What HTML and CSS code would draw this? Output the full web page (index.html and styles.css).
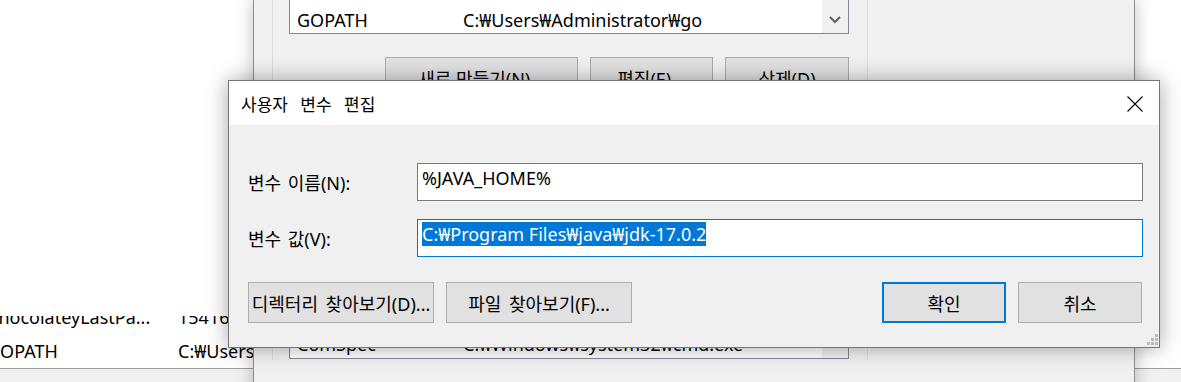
FILE: index.html
```html
<!DOCTYPE html>
<html lang="ko">
<head>
  <meta charset="UTF-8" />
  <title>사용자 변수 편집</title>
  <link rel="stylesheet" href="styles.css">
</head>
<body>
  <div class="screen">

    <!-- 뒤쪽 목록 창 -->
    <div class="back-window">
      <div class="back-list">
        <div class="back-rows">
          <div class="back-row"><span class="back-name">ChocolateyLastPa...</span><span>1541698</span></div>
          <div class="back-row"><span class="back-name">GOPATH</span><span>C:₩Users₩Administrator₩go</span></div>
        </div>
      </div>
    </div>

    <!-- 환경 변수 창 -->
    <div class="env-window">
      <div class="group">
        <div class="var-list top-list">
          <div class="var-rows">
            <div class="var-row"><span class="var-name">GOPATH</span><span>C:₩Users₩Administrator₩go</span></div>
          </div>
          <div class="scrollbar">
            <div class="scroll-arrow">
              <svg width="12" height="8" viewBox="0 0 12 8"><path d="M1 1 L6 6 L11 1" fill="none" stroke="#606060" stroke-width="2"/></svg>
            </div>
          </div>
        </div>

        <div class="env-buttons">
          <div class="btn btn-new">새로 만들기(N)...</div>
          <div class="btn btn-edit">편집(E)...</div>
          <div class="btn btn-del">삭제(D)</div>
        </div>

        <div class="var-list bottom-list">
          <div class="var-rows">
            <div class="var-row"><span class="var-name">ComSpec</span><span>C:₩Windows₩system32₩cmd.exe</span></div>
          </div>
          <div class="scrollbar">
            <div class="scroll-arrow">
              <svg width="12" height="8" viewBox="0 0 12 8"><path d="M1 1 L6 6 L11 1" fill="none" stroke="#606060" stroke-width="2"/></svg>
            </div>
          </div>
        </div>
      </div>
    </div>

    <!-- 사용자 변수 편집 대화상자 -->
    <div class="dialog">
      <div class="title-bar">
        <span class="title">사용자 변수 편집</span>
        <svg class="close" width="16" height="16" viewBox="0 0 16 16"><path d="M0.5 0.5 L15.5 15.5 M15.5 0.5 L0.5 15.5" stroke="#000" stroke-width="1.1"/></svg>
      </div>

      <div class="dialog-body">
        <div class="fields">
          <label class="field-label">변수 이름(N):</label>
          <div class="text-box">%JAVA_HOME%</div>

          <label class="field-label">변수 값(V):</label>
          <div class="text-box focused"><span class="selected">C:₩Program Files₩java₩jdk-17.0.2</span></div>
        </div>

        <div class="dialog-buttons">
          <div class="btn wide">디렉터리 찾아보기(D)...</div>
          <div class="btn wide">파일 찾아보기(F)...</div>
          <div class="spacer"></div>
          <div class="btn short default">확인</div>
          <div class="btn short">취소</div>
        </div>
      </div>

      <svg class="grip" width="11" height="11" viewBox="0 0 11 11">
        <rect x="8" y="0" width="3" height="3" fill="#bcbcbc"/>
        <rect x="4" y="4" width="3" height="3" fill="#bcbcbc"/>
        <rect x="8" y="4" width="3" height="3" fill="#bcbcbc"/>
        <rect x="0" y="8" width="3" height="3" fill="#bcbcbc"/>
        <rect x="4" y="8" width="3" height="3" fill="#bcbcbc"/>
        <rect x="8" y="8" width="3" height="3" fill="#bcbcbc"/>
      </svg>
    </div>

  </div>
</body>
</html>
```

FILE: styles.css
```css
body {
  margin: 0;
  font-family: "Noto Sans", "Noto Sans CJK KR", sans-serif;
  font-size: 18px;
  color: #000;
  background-color: #fff;
}

.screen {
  position: relative;
  width: 1181px;
  height: 382px;
  overflow: hidden;
  background-color: #fff;
}

/* 뒤쪽 목록 창 */
.back-window {
  height: 382px;
  background-color: #f0f0f0;
}

.back-list {
  height: 368px;
  background-color: #fff;
  border-bottom: 1px solid #a0a0a0;
  display: flex;
  flex-direction: column;
  justify-content: flex-end;
}

.back-rows {
  height: 52px;
  overflow: hidden;
  display: flex;
  flex-direction: column;
  justify-content: flex-end;
}

.back-row {
  flex-shrink: 0;
  height: 34px;
  display: flex;
  align-items: center;
  margin-left: -13px;
  white-space: nowrap;
}

.back-name {
  width: 191px;
  flex-shrink: 0;
}

/* 환경 변수 창 */
.env-window {
  position: absolute;
  left: 253px;
  top: 0;
  width: 882px;
  height: 400px;
  box-sizing: border-box;
  background-color: #f0f0f0;
  border-left: 1px solid #8f8f8f;
  border-right: 1px solid #8f8f8f;
  box-shadow: 0 0 16px rgba(0, 0, 0, 0.25);
}

.group {
  margin-left: 18px;
  width: 596px;
  height: 100%;
  box-sizing: border-box;
  border-left: 1px solid #dcdcdc;
  border-right: 1px solid #dcdcdc;
  padding-left: 16px;
}

.var-list {
  width: 560px;
  box-sizing: border-box;
  background-color: #fff;
  border: 1px solid #828790;
  display: flex;
}

.top-list {
  margin-top: -40px;
  height: 74px;
}

.bottom-list {
  margin-top: 202px;
  height: 59px;
}

.var-rows {
  flex: 1;
  display: flex;
  flex-direction: column;
  justify-content: flex-end;
}

.bottom-list .var-rows {
  padding-bottom: 1px;
}

.var-row {
  height: 26px;
  display: flex;
  align-items: center;
  padding-left: 7px;
  white-space: nowrap;
}

.var-name {
  width: 166px;
}

.scrollbar {
  width: 26px;
  background-color: #f0f0f0;
  display: flex;
  flex-direction: column;
  justify-content: flex-end;
}

.bottom-list .scrollbar {
  justify-content: flex-start;
  padding-top: 20px;
}

.scroll-arrow {
  height: 26px;
  display: flex;
  align-items: center;
  justify-content: center;
}

.env-buttons {
  width: 560px;
  margin-top: 23px;
  display: flex;
  justify-content: flex-end;
  gap: 12px;
}

.btn {
  height: 41px;
  box-sizing: border-box;
  background-color: #e1e1e1;
  border: 1px solid #adadad;
  display: flex;
  align-items: center;
  justify-content: center;
  white-space: nowrap;
  overflow: hidden;
}

.btn-new { width: 193px; }
.btn-edit { width: 123px; }
.btn-del { width: 124px; }

/* 대화상자 */
.dialog {
  position: absolute;
  left: 228px;
  top: 80px;
  width: 932px;
  height: 268px;
  box-sizing: border-box;
  border: 1px solid #767676;
  background-color: #f0f0f0;
  box-shadow: 0 0 20px rgba(0, 0, 0, 0.35);
}

.title-bar {
  height: 44px;
  background-color: #fff;
  display: flex;
  align-items: center;
  justify-content: space-between;
  padding-left: 12px;
  padding-right: 16px;
}

.title {
  font-size: 17px;
  word-spacing: 8px;
}

.close {
  display: block;
  margin-top: 1px;
}

.dialog-body {
  padding: 38px 16px 24px 19px;
}

.fields {
  display: grid;
  grid-template-columns: 169px 1fr;
  grid-auto-rows: 38px;
  row-gap: 18px;
  align-items: center;
}

.field-label {
  word-spacing: 2px;
}

.text-box {
  height: 38px;
  box-sizing: border-box;
  background-color: #fff;
  border: 1px solid #7a7a7a;
  padding: 2px 4px 0;
  white-space: nowrap;
}

.text-box.focused {
  border-color: #0078d7;
}

.selected {
  background-color: #0078d7;
  color: #fff;
}

.dialog-buttons {
  margin-top: 25px;
  margin-right: 1px;
  display: flex;
  gap: 12px;
}

.btn.wide {
  width: 186px;
  word-spacing: 3px;
}

.btn.short { width: 124px; }

.spacer {
  flex: 1;
}

.btn.default {
  border: 2px solid #0078d7;
}

.grip {
  position: absolute;
  right: 1px;
  bottom: 2px;
}
```
